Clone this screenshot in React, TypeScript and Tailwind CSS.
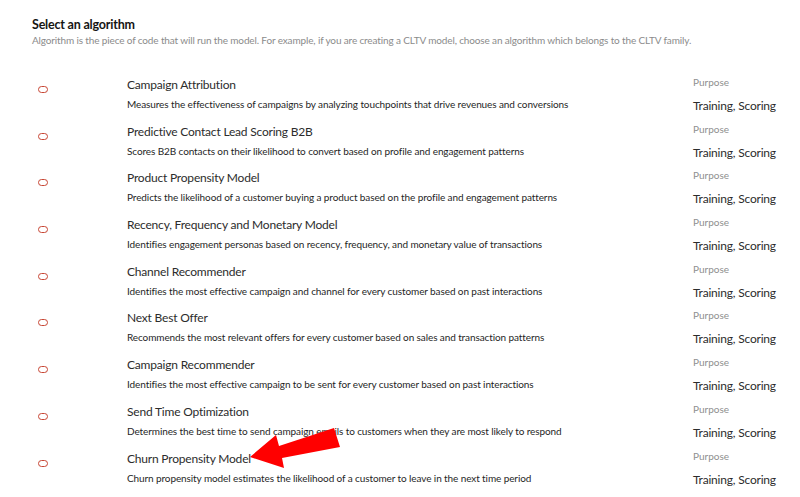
const algorithms = [
  { name: "Campaign Attribution", desc: "Measures the effectiveness of campaigns by analyzing touchpoints that drive revenues and conversions" },
  { name: "Predictive Contact Lead Scoring B2B", desc: "Scores B2B contacts on their likelihood to convert based on profile and engagement patterns" },
  { name: "Product Propensity Model", desc: "Predicts the likelihood of a customer buying a product based on the profile and engagement patterns" },
  { name: "Recency, Frequency and Monetary Model", desc: "Identifies engagement personas based on recency, frequency, and monetary value of transactions" },
  { name: "Channel Recommender", desc: "Identifies the most effective campaign and channel for every customer based on past interactions" },
  { name: "Next Best Offer", desc: "Recommends the most relevant offers for every customer based on sales and transaction patterns" },
  { name: "Campaign Recommender", desc: "Identifies the most effective campaign to be sent for every customer based on past interactions" },
  { name: "Send Time Optimization", desc: "Determines the best time to send campaign emails to customers when they are most likely to respond" },
  { name: "Churn Propensity Model", desc: "Churn propensity model estimates the likelihood of a customer to leave in the next time period" },
];

export default function App() {
  return (
    <div className="relative w-[800px] h-[497px] bg-white overflow-hidden font-['Lato',sans-serif]">
      {/* header */}
      <div className="pl-[32px] pt-[16px]">
        <h1 className="text-[12.5px] font-bold tracking-[-0.2px] text-[#161513] leading-[18px]">Select an algorithm</h1>
        <p className="-mt-[1px] text-[10px] tracking-[-0.14px] text-[#8b8b8b] leading-[14px]">
          Algorithm is the piece of code that will run the model. For example, if you are creating a CLTV model, choose an algorithm which belongs to the CLTV family.
        </p>
      </div>

      {/* list */}
      <div className="mt-[28px] flex flex-col">
        {algorithms.map((a) => (
          <div key={a.name} className="flex h-[46.7px]">
            <div className="w-[127px] pl-[38px] pt-[11px]">
              <div className="w-[10px] h-[7px] rounded-full border-[1.5px] border-[#c74634]"></div>
            </div>
            <div className="flex-1 pt-[1px]">
              <div className="text-[12px] tracking-[-0.2px] text-[#2c2c2c] leading-[18px]">{a.name}</div>
              <div className="mt-[3px] text-[10px] tracking-[-0.1px] text-[#1f1f1f] leading-[14px]">{a.desc}</div>
            </div>
            <div className="w-[107px]">
              <div className="text-[10px] text-[#8f8f8f] leading-[14px]">Purpose</div>
              <div className="mt-[8px] text-[12px] tracking-[-0.2px] text-[#2c2c2c] leading-[18px]">Training, Scoring</div>
            </div>
          </div>
        ))}
      </div>

      {/* annotation arrow */}
      <svg className="absolute left-0 top-0 pointer-events-none" width="800" height="497">
        <polygon points="250,457 276,435 279,446 334,428 340,447 282,458 284,468" fill="#ff0000" />
      </svg>
    </div>
  );
}
